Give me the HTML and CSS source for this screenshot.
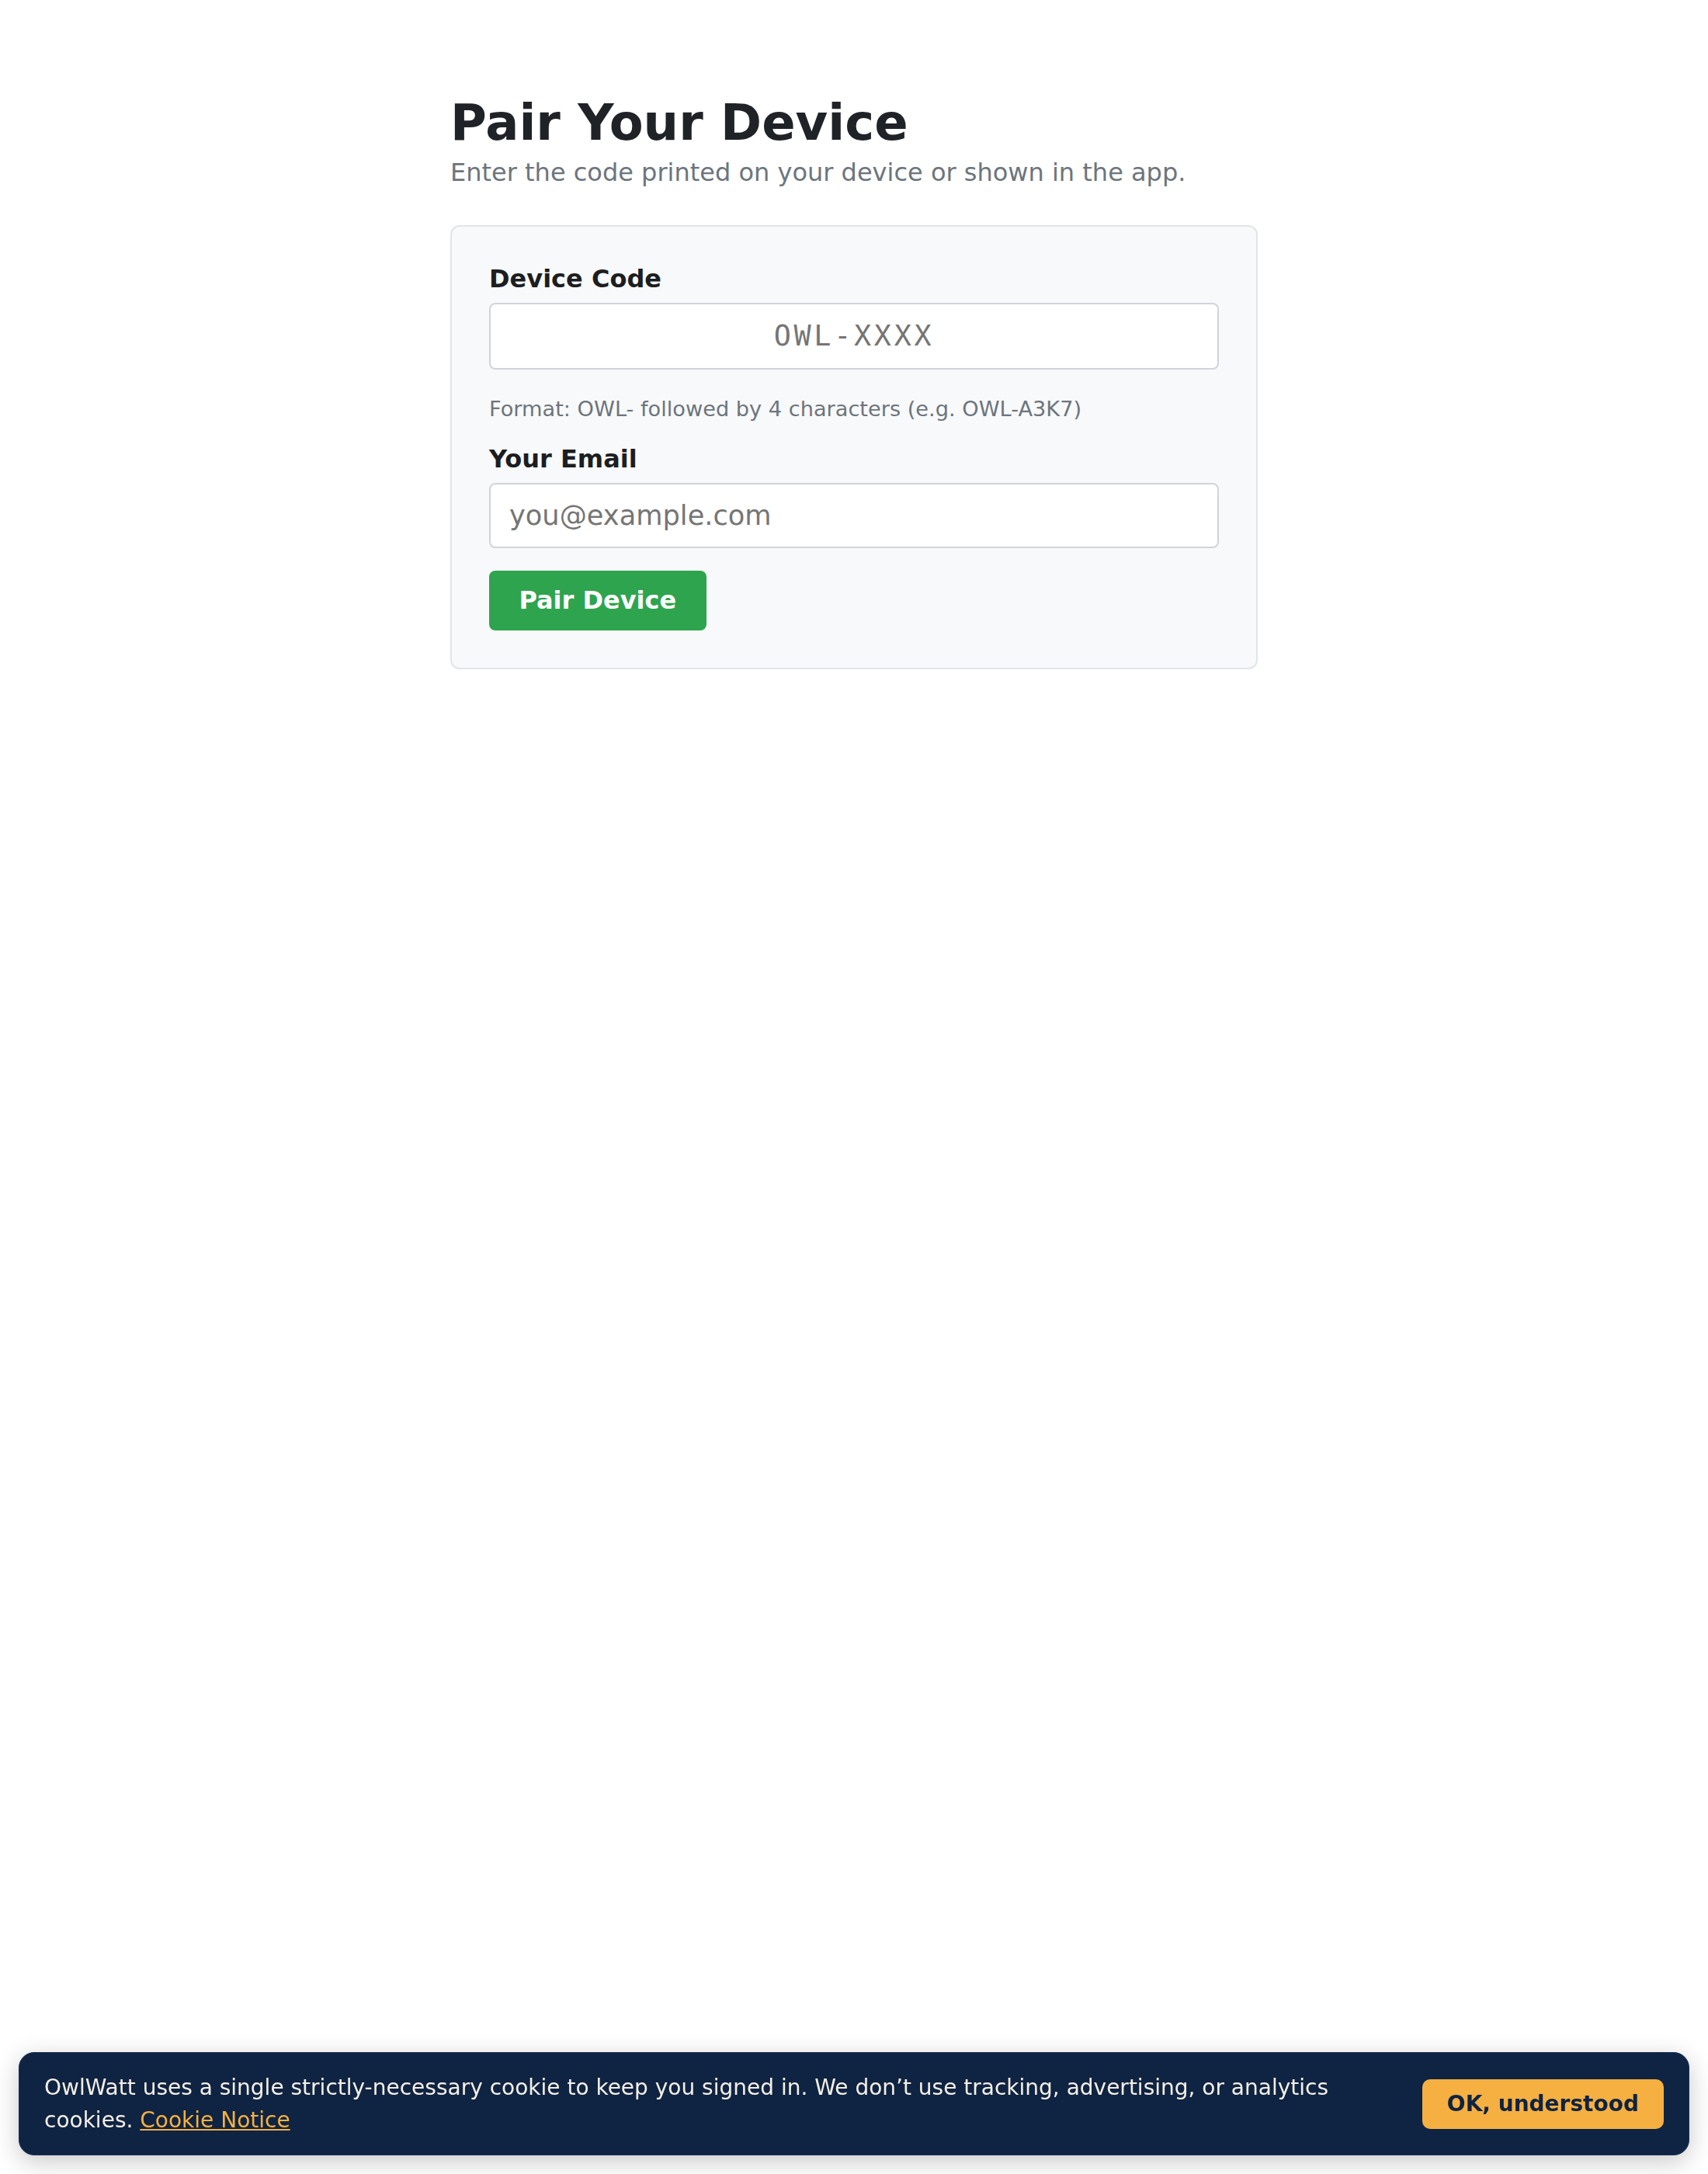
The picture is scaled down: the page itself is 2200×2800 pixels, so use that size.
FILE: index.html
```html
<!DOCTYPE html>
<html lang="en">
<head>
  <meta charset="UTF-8">
  <meta name="viewport" content="width=device-width, initial-scale=1.0">
  <title>Pair Your Device - OwlWatt</title>
  <link rel="stylesheet" href="styles.css">
</head>
<body>
  <main class="page">
    <h1 class="page-title">Pair Your Device</h1>
    <p class="page-intro">Enter the code printed on your device or shown in the app.</p>

    <form class="pair-card" onsubmit="return false">
      <label class="field-label" for="device-code">Device Code</label>
      <input class="field-input code-input" type="text" id="device-code" placeholder="OWL-XXXX" maxlength="8" autocomplete="off">
      <p class="field-hint">Format: OWL- followed by 4 characters (e.g. OWL-A3K7)</p>

      <label class="field-label" for="email">Your Email</label>
      <input class="field-input" type="email" id="email" placeholder="you@example.com">

      <button class="pair-btn" type="submit">Pair Device</button>
    </form>
  </main>

  <!-- cookie banner, fixed to the bottom of the window -->
  <div class="cookie-banner">
    <p class="cookie-text">OwlWatt uses a single strictly-necessary cookie to keep you signed in. We don’t use tracking, advertising, or analytics cookies. <a href="#" class="cookie-link">Cookie Notice</a></p>
    <button class="cookie-btn" type="button">OK, understood</button>
  </div>
</body>
</html>
```
FILE: styles.css
```css
body {
  margin: 0;
  font-family: "DejaVu Sans", sans-serif;
  background-color: #ffffff;
  color: #1f2328;
}

.page {
  width: 1040px;
  margin: 0 auto;
  padding-top: 120px;
}

.page-title {
  margin: 0 0 6px;
  font-size: 64px;
  line-height: 1.2;
  font-weight: bold;
  color: #1f2328;
}

.page-intro {
  margin: 0 0 49px;
  font-size: 32px;
  color: #6c757d;
}

.pair-card {
  display: flex;
  flex-direction: column;
  padding: 48px;
  border: 2px solid #e1e4e8;
  border-radius: 12px;
  background-color: #f8f9fa;
}

.field-label {
  margin-bottom: 12.5px;
  font-size: 32px;
  font-weight: bold;
  color: #1c1e21;
}

.field-input {
  box-sizing: border-box;
  width: 100%;
  margin: 0;
  padding: 19.2px 24px;
  border: 2px solid #d0d4da;
  border-radius: 8px;
  background-color: #ffffff;
  font-family: "DejaVu Sans", sans-serif;
  font-size: 35.2px;
  color: #1f2328;
}

.field-input::placeholder {
  color: #757575;
}

.code-input {
  font-family: "DejaVu Sans Mono", monospace;
  font-size: 36.8px;
  letter-spacing: 0.1em;
  text-align: center;
}

.field-hint {
  margin: 35px 0 30px;
  font-size: 27.2px;
  color: #6c757d;
}

.pair-btn {
  align-self: flex-start;
  margin-top: 29px;
  padding: 19.7px 38.4px;
  border: none;
  border-radius: 8px;
  background-color: #2ea44f;
  color: #ffffff;
  font-family: "DejaVu Sans", sans-serif;
  font-size: 32px;
  font-weight: bold;
  cursor: pointer;
}

.cookie-banner {
  position: fixed;
  left: 24px;
  right: 24px;
  bottom: 24px;
  display: flex;
  align-items: center;
  gap: 48px;
  padding: 23.5px 32px;
  border: 1px solid #1b3359;
  border-radius: 20px;
  background-color: #0f2342;
  box-shadow: 0 8px 32px rgba(0, 0, 0, 0.22);
}

.cookie-text {
  flex: 1;
  margin: 0;
  font-size: 28px;
  line-height: 1.5;
  color: #f3efe6;
}

.cookie-link {
  color: #f5b041;
}

.cookie-btn {
  flex-shrink: 0;
  padding: 15.5px 32px;
  border: none;
  border-radius: 10px;
  background-color: #f5b041;
  color: #0f2342;
  font-family: "DejaVu Sans", sans-serif;
  font-size: 28px;
  font-weight: bold;
  cursor: pointer;
}
```
